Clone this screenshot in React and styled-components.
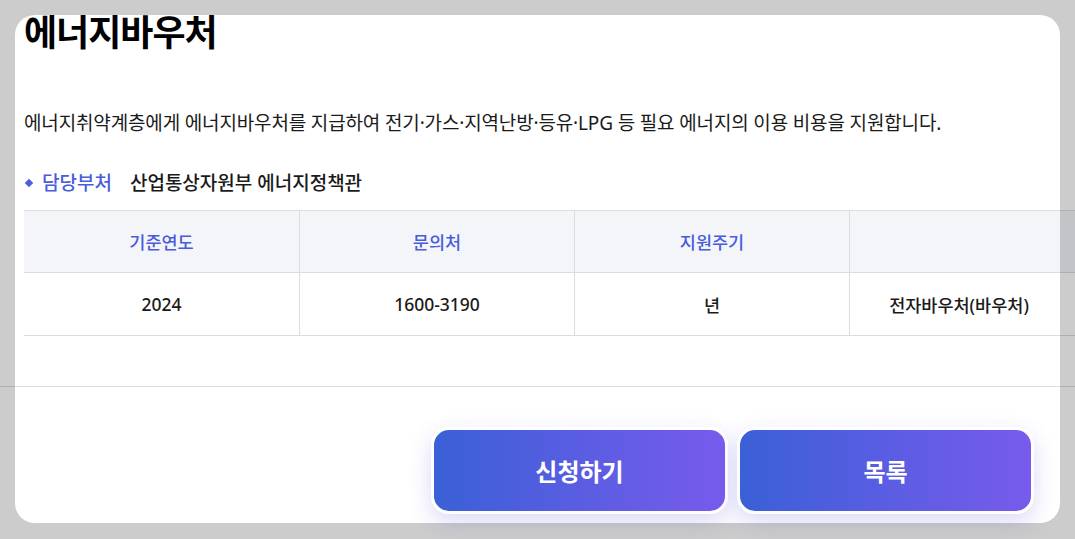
import React from 'react';
import styled, {createGlobalStyle} from 'styled-components';

const GlobalStyle = createGlobalStyle`
html, body {
  margin: 0;
  padding: 0;
  background: #ffffff;
  overflow: hidden;
}
body {
  font-family: "Noto Sans", "Noto Sans CJK KR", sans-serif;
  color: #111;
}
`;

const Page = styled.div`
width: 1075px;
height: 539px;
padding: 15px 15px 16px 15px;
box-sizing: border-box;
`;

const Sheet = styled.div`
position: relative;
height: 508px;
border-radius: 20px;
display: flex;
flex-direction: column;
&::after {
  content: '';
  position: absolute;
  inset: 0;
  border-radius: 20px;
  box-shadow: 0 0 0 3000px rgba(0, 0, 0, 0.2);
  pointer-events: none;
  z-index: 5;
}
`;

const Body = styled.div`
padding: 0 0 0 9px;
display: flex;
flex-direction: column;
`;

const Title = styled.h1`
margin: -9px 0 0;
font-family: "Noto Sans CJK KR", sans-serif;
font-size: 36px;
line-height: 48px;
font-weight: 700;
letter-spacing: -1px;
color: #000;
`;

const Desc = styled.p`
margin: 56px 0 0;
font-size: 19px;
line-height: 26px;
letter-spacing: -0.15px;
color: #1a1a1a;
`;

const Dept = styled.div`
display: flex;
align-items: center;
margin-top: 34px;
font-size: 19px;
line-height: 26px;
font-weight: 500;
`;

const Bullet = styled.span`
width: 6px;
height: 6px;
background: #4b5fdc;
transform: rotate(45deg);
margin: 0 10px 0 2px;
`;

const DeptLabel = styled.span`
color: #4a5cdc;
margin-right: 18px;
`;

const DeptValue = styled.span`
color: #1a1a1a;
`;

const Table = styled.div`
margin-top: 14px;
width: 1120px;
border-top: 1px solid #dddddd;
`;

const Row = styled.div`
display: grid;
grid-template-columns: 275px 275px 275px 295px;
height: ${({head}) => head ? '61px' : '62px'};
background: ${({head}) => head ? '#f4f5f9' : '#ffffff'};
border-bottom: 1px solid #dddddd;
`;

const Cell = styled.div`
display: flex;
align-items: center;
justify-content: center;
font-size: 17.5px;
font-weight: 500;
color: ${({head}) => head ? '#4a5cdc' : '#1a1a1a'};
border-left: ${({first}) => first ? 'none' : '1px solid #dddddd'};
padding-right: ${({shift}) => shift || 0}px;
`;

const Divider = styled.div`
margin: 50px -40px 0 -15px;
border-top: 1px solid #dddddd;
`;

const Actions = styled.div`
display: flex;
justify-content: flex-end;
gap: 9px;
padding-right: 26px;
margin-top: 40px;
`;

const Button = styled.button`
width: 297px;
height: 87px;
border: 3px solid #ffffff;
border-radius: 18px;
background: linear-gradient(90deg, #3a60d6 0%, #5a5de2 50%, #785bec 100%);
color: #ffffff;
font-family: "Noto Sans CJK KR", sans-serif;
font-size: 24px;
font-weight: 700;
box-shadow: 0 8px 22px rgba(90, 80, 220, 0.22);
cursor: pointer;
`;

const headers = ['기준연도', '문의처', '지원주기', ''];
const values = ['2024', '1600-3190', '년', '전자바우처(바우처)'];

const App = () => {
    return (
        <>
            <GlobalStyle/>
            <Page>
                <Sheet>
                    <Body>
                        <Title>에너지바우처</Title>
                        <Desc>에너지취약계층에게 에너지바우처를 지급하여 전기·가스·지역난방·등유·LPG 등 필요 에너지의 이용 비용을 지원합니다.</Desc>
                        <Dept>
                            <Bullet/>
                            <DeptLabel>담당부처</DeptLabel>
                            <DeptValue>산업통상자원부 에너지정책관</DeptValue>
                        </Dept>
                        <Table>
                            <Row head>
                                {headers.map((h, i) => (
                                    <Cell head first={i === 0} key={i}>{h}</Cell>
                                ))}
                            </Row>
                            <Row>
                                {values.map((v, i) => (
                                    <Cell first={i === 0} shift={i === 3 ? 76 : 0} key={i}>{v}</Cell>
                                ))}
                            </Row>
                        </Table>
                    </Body>
                    <Divider/>
                    <Actions>
                        <Button>신청하기</Button>
                        <Button>목록</Button>
                    </Actions>
                </Sheet>
            </Page>
        </>
    );
};

export default App;
